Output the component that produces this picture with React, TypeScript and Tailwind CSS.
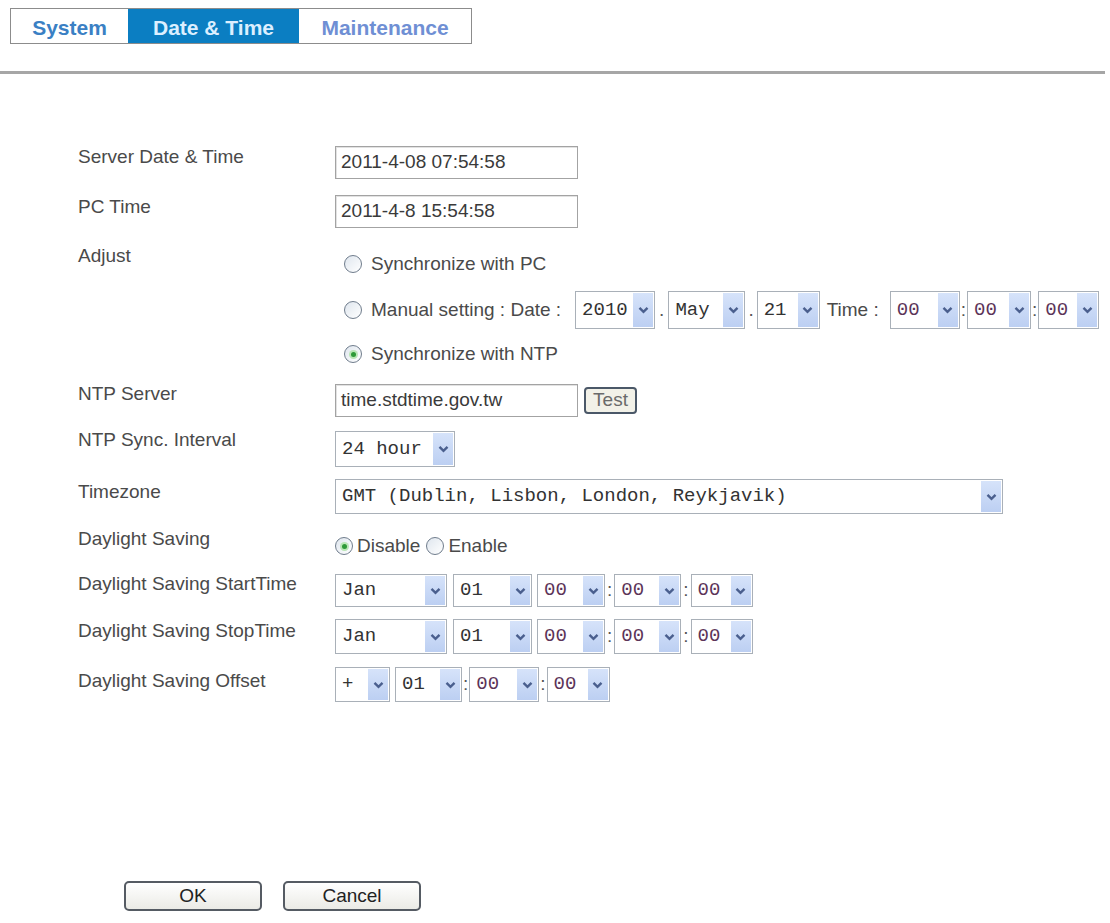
import React from "react";

const SANS = "font-['Liberation_Sans',Arial,sans-serif]";
const MONO = "font-['Liberation_Mono','Courier_New',monospace]";

function Chevron() {
  return (
    <svg width="11" height="8" viewBox="0 0 11 8" fill="none">
      <path d="M1.5 1.8 L5.5 5.8 L9.5 1.8" stroke="#4a5f8e" strokeWidth="2.4" />
    </svg>
  );
}

function Dropdown({
  value,
  className,
  tone = "text-[#333]",
}: {
  value: string;
  className: string;
  tone?: string;
}) {
  return (
    <div className={`flex items-stretch border border-[#a9b0b8] bg-white ${className}`}>
      <span className={`flex flex-1 items-center whitespace-pre pl-[6px] text-[19px] ${MONO} ${tone}`}>
        {value}
      </span>
      <span className="my-px mr-px flex w-[20px] items-center justify-center bg-gradient-to-b from-[#d6e3fa] to-[#bccff2]">
        <Chevron />
      </span>
    </div>
  );
}

function Radio({ checked = false }: { checked?: boolean }) {
  return (
    <span className="flex h-[18px] w-[18px] shrink-0 items-center justify-center rounded-full border border-[#6f7c8c] bg-gradient-to-br from-[#dfe6ee] to-white">
      {checked && (
        <span className="flex h-[9px] w-[9px] items-center justify-center rounded-full bg-[#b9e6b5]">
          <span className="h-[5px] w-[5px] rounded-full bg-[#2e9a38]" />
        </span>
      )}
    </span>
  );
}

function TextBox({ value }: { value: string }) {
  return (
    <div className="flex h-[33px] w-[243px] items-center border border-[#a3a3a3] bg-white pl-[5px] text-[19px] text-[#3a3a3a] shadow-[inset_1px_1px_0_#e2e2e2]">
      {value}
    </div>
  );
}

function Label({ children, top }: { children: React.ReactNode; top: string }) {
  return <div className={`w-[257px] shrink-0 leading-[22px] text-[#4a4a4a] ${top}`}>{children}</div>;
}

const Sep = ({ ch, className = "" }: { ch: string; className?: string }) => (
  <span className={`text-[19px] text-[#555] ${className}`}>{ch}</span>
);

export default function App() {
  return (
    <div className={`relative h-[923px] w-[1110px] overflow-hidden bg-white text-[19px] ${SANS}`}>
      {/* tab strip */}
      <div className="pl-[10px] pt-[8px]">
        <div className="flex h-[36px] w-[462px] border border-[#8c8c8c] text-[21px] font-bold">
          <div className="flex w-[117px] items-center justify-center pt-[3px] text-[#3a80c4]">System</div>
          <div className="flex w-[171px] items-center justify-center bg-[#0b7ec2] pt-[3px] text-[#dcefff]">Date &amp; Time</div>
          <div className="flex flex-1 items-center justify-center pt-[3px] text-[#6f8fd4]">Maintenance</div>
        </div>
      </div>
      <div className="mt-[27px] h-[3px] w-[1105px] bg-[#a6a6a6]" />

      {/* settings form */}
      <div className="mt-[70px] pl-[78px]">
        <div className="flex h-[49px] items-start">
          <Label top="mt-[2px]">Server Date &amp; Time</Label>
          <div className="mt-[2px]">
            <TextBox value="2011-4-08 07:54:58" />
          </div>
        </div>

        <div className="flex h-[49px] items-start">
          <Label top="mt-[3px]">PC Time</Label>
          <div className="mt-[2px]">
            <TextBox value="2011-4-8 15:54:58" />
          </div>
        </div>

        <div className="flex h-[137px] items-start">
          <Label top="mt-[3px]">Adjust</Label>
          <div className="flex flex-col pl-[9px] text-[#4a4a4a]">
            <div className="mt-[11px] flex h-[22px] items-center gap-[9px]">
              <Radio />
              <span>Synchronize with PC</span>
            </div>
            <div className="mt-[16px] flex h-[38px] items-center">
              <Radio />
              <span className="ml-[9px]">Manual setting : Date :</span>
              <Dropdown value="2010" className="ml-[14px] h-[38px] w-[80px]" />
              <Sep ch="." className="mx-[4px]" />
              <Dropdown value="May" className="h-[38px] w-[77px]" />
              <Sep ch="." className="mx-[3px]" />
              <Dropdown value="21" className="h-[38px] w-[63px]" />
              <span className="ml-[7px] mr-[11px]">Time :</span>
              <Dropdown value="00" tone="text-[#5c3458]" className="h-[38px] w-[70px]" />
              <Sep ch=":" className="mx-px" />
              <Dropdown value="00" tone="text-[#5c3458]" className="h-[38px] w-[64px]" />
              <Sep ch=":" className="mx-px" />
              <Dropdown value="00" tone="text-[#5c3458]" className="h-[38px] w-[61px]" />
            </div>
            <div className="mt-[14px] flex h-[22px] items-center gap-[9px]">
              <Radio checked />
              <span>Synchronize with NTP</span>
            </div>
          </div>
        </div>

        <div className="flex h-[45px] items-start">
          <Label top="mt-[4px]">NTP Server</Label>
          <div className="mt-[5px] flex items-center gap-[6px]">
            <TextBox value="time.stdtime.gov.tw" />
            <button className="flex h-[27px] w-[53px] items-center justify-center rounded-[4px] border-2 border-[#4b5868] bg-[#f2f1e8] text-[19px] text-[#6a6a6a]">
              Test
            </button>
          </div>
        </div>

        <div className="flex h-[49px] items-start">
          <Label top="mt-[5px]">NTP Sync. Interval</Label>
          <Dropdown value="24 hour" className="mt-[7px] h-[36px] w-[120px]" />
        </div>

        <div className="flex h-[48px] items-start">
          <Label top="mt-[8px]">Timezone</Label>
          <Dropdown value="GMT (Dublin, Lisbon, London, Reykjavik)" className="mt-[6px] h-[35px] w-[668px]" />
        </div>

        <div className="flex h-[43px] items-start">
          <Label top="mt-[7px]">Daylight Saving</Label>
          <div className="mt-[14px] flex h-[22px] items-center text-[#4a4a4a]">
            <Radio checked />
            <span className="ml-[4px]">Disable</span>
            <span className="ml-[6px]">
              <Radio />
            </span>
            <span className="ml-[4px]">Enable</span>
          </div>
        </div>

        <div className="flex h-[48px] items-start">
          <Label top="mt-[9px]">Daylight Saving StartTime</Label>
          <div className="mt-[10px] flex items-center">
            <Dropdown value="Jan" className="h-[33px] w-[112px]" />
            <Dropdown value="01" className="ml-[6px] h-[33px] w-[79px]" />
            <Dropdown value="00" tone="text-[#5c3458]" className="ml-[5px] h-[33px] w-[68px]" />
            <Sep ch=":" className="mx-[2px]" />
            <Dropdown value="00" tone="text-[#5c3458]" className="h-[33px] w-[67px]" />
            <Sep ch=":" className="mx-[2px]" />
            <Dropdown value="00" tone="text-[#5c3458]" className="h-[33px] w-[62px]" />
          </div>
        </div>

        <div className="flex h-[47px] items-start">
          <Label top="mt-[8px]">Daylight Saving StopTime</Label>
          <div className="mt-[7px] flex items-center">
            <Dropdown value="Jan" className="h-[35px] w-[112px]" />
            <Dropdown value="01" className="ml-[6px] h-[35px] w-[79px]" />
            <Dropdown value="00" tone="text-[#5c3458]" className="ml-[5px] h-[35px] w-[68px]" />
            <Sep ch=":" className="mx-[2px]" />
            <Dropdown value="00" tone="text-[#5c3458]" className="h-[35px] w-[67px]" />
            <Sep ch=":" className="mx-[2px]" />
            <Dropdown value="00" tone="text-[#5c3458]" className="h-[35px] w-[62px]" />
          </div>
        </div>

        <div className="flex h-[50px] items-start">
          <Label top="mt-[11px]">Daylight Saving Offset</Label>
          <div className="mt-[8px] flex items-center">
            <Dropdown value="+" className="h-[35px] w-[55px]" />
            <Dropdown value="01" className="ml-[5px] h-[35px] w-[67px]" />
            <Sep ch=":" className="mx-px" />
            <Dropdown value="00" tone="text-[#5c3458]" className="h-[35px] w-[70px]" />
            <Sep ch=":" className="mx-px" />
            <Dropdown value="00" tone="text-[#5c3458]" className="h-[35px] w-[63px]" />
          </div>
        </div>
      </div>

      {/* actions */}
      <div className="mt-[172px] flex gap-[21px] pl-[124px]">
        <button className="flex h-[30px] w-[138px] items-center justify-center rounded-[5px] border-2 border-[#555b63] bg-gradient-to-b from-white to-[#ebebe6] text-[19px] text-[#222]">
          OK
        </button>
        <button className="flex h-[30px] w-[138px] items-center justify-center rounded-[5px] border-2 border-[#555b63] bg-gradient-to-b from-white to-[#ebebe6] text-[19px] text-[#222]">
          Cancel
        </button>
      </div>
    </div>
  );
}
